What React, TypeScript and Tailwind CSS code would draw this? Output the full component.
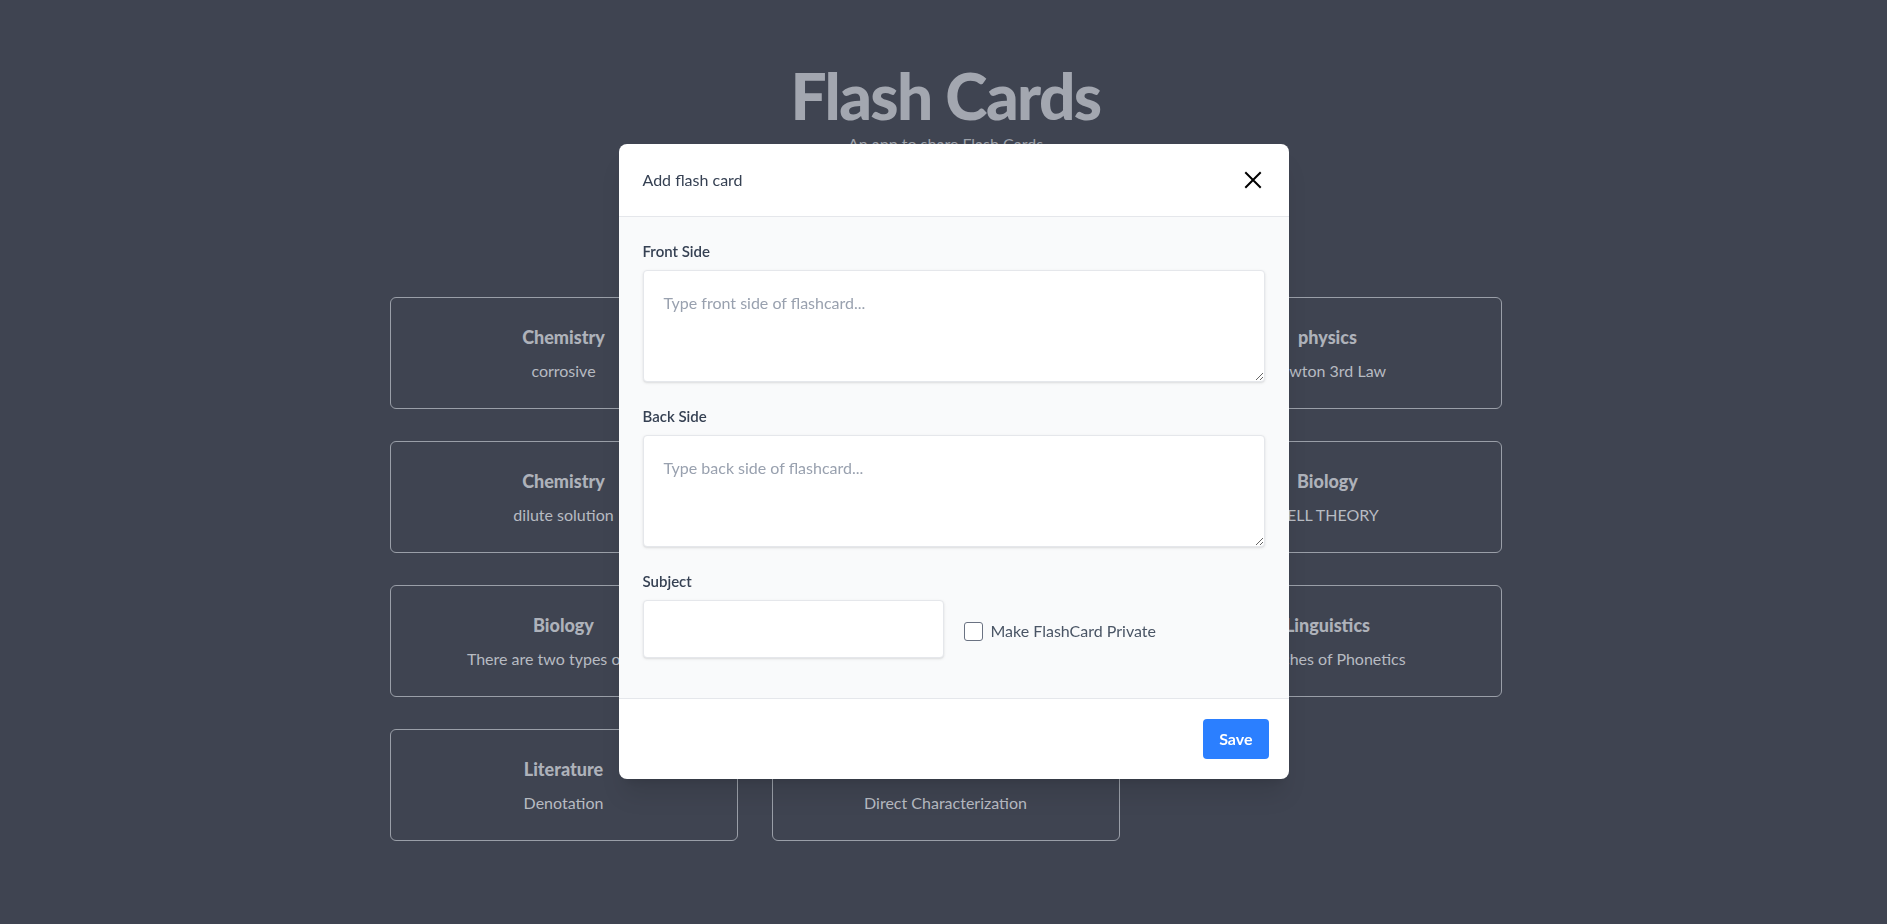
import { useState } from "react";

const CARDS = [
  { subject: "Chemistry", text: "corrosive" },
  { subject: "Physics", text: "Kinetic Energy" },
  { subject: "physics", text: "Newton 3rd Law" },
  { subject: "Chemistry", text: "dilute solution" },
  { subject: "Chemistry", text: "Concentrated Solution" },
  { subject: "Biology", text: "CELL THEORY" },
  { subject: "Biology", text: "There are two types of cells" },
  { subject: "Physics", text: "Newton 1st Law" },
  { subject: "Linguistics", text: "Branches of Phonetics" },
  { subject: "Literature", text: "Denotation" },
  { subject: "Literature", text: "Direct Characterization" },
];

function CloseIcon() {
  return (
    <svg viewBox="0 0 24 24" className="w-6 h-6" fill="none" stroke="currentColor" strokeWidth={2} strokeLinecap="square">
      <path d="M5 5l14 14M19 5L5 19" />
    </svg>
  );
}

export default function App() {
  const [isPrivate, setIsPrivate] = useState(false);

  return (
    <div className="min-h-screen bg-[#3f4451] font-['Lato',sans-serif]">
      {/* Page */}
      <div className="flex flex-col items-center pt-16 pb-16 pl-1">
        <h1 className="text-[64px] leading-none font-black text-[#a3a7b0] tracking-tight">Flash Cards</h1>
        <p className="mt-1 text-base leading-6 text-[#9da1aa]">An app to share Flash Cards</p>
        <button className="mt-12 h-12 px-6 rounded-md bg-[#4a5060] text-[#a3a7b0] font-bold">Add Flash Card</button>

        <div className="mt-[45px] w-[1112px] grid grid-cols-3 gap-x-[34px] gap-y-8">
          {CARDS.map((c, i) => (
            <div key={i}
              className="h-28 rounded-md border border-[#9a9fa8] flex flex-col items-center justify-center text-center">
              <h3 className="text-lg leading-7 font-black text-[#aeb2ba]">{c.subject}</h3>
              <p className="mt-2 text-base leading-6 text-[#b7bbc2]">{c.text}</p>
            </div>
          ))}
        </div>
      </div>

      {/* Modal */}
      <div className="fixed inset-0 flex justify-center pl-5">
        <div className="mt-[144px] w-[670px] self-start rounded-lg bg-white overflow-hidden shadow-xl">
          <div className="flex items-center justify-between p-6 border-b border-gray-200">
            <h2 className="text-base leading-6 text-gray-700">Add flash card</h2>
            <button className="text-black"><CloseIcon /></button>
          </div>

          <div className="bg-gray-50 px-6 pt-6 pb-10">
            <label className="block text-[15px] leading-[21px] font-semibold text-gray-700">Front Side</label>
            <textarea
              placeholder="Type front side of flashcard..."
              className="mt-2 block w-full h-[112px] p-5 bg-white border border-gray-200 rounded shadow-sm text-base text-gray-700 placeholder:text-gray-400 outline-none"
            />

            <label className="mt-6 block text-[15px] leading-[21px] font-semibold text-gray-700">Back Side</label>
            <textarea
              placeholder="Type back side of flashcard..."
              className="mt-2 block w-full h-[112px] p-5 bg-white border border-gray-200 rounded shadow-sm text-base text-gray-700 placeholder:text-gray-400 outline-none"
            />

            <label className="mt-6 block text-[15px] leading-[21px] font-semibold text-gray-700">Subject</label>
            <div className="mt-2 grid grid-cols-2 gap-5 items-center">
              <input className="h-[58px] px-4 bg-white border border-gray-200 rounded shadow-sm outline-none" />
              <label className="flex items-center gap-2 pt-1 text-base text-gray-600">
                <input type="checkbox" checked={isPrivate} onChange={(e) => setIsPrivate(e.target.checked)}
                  className="appearance-none w-[19px] h-[19px] rounded-[3px] border border-gray-500 bg-white" />
                Make FlashCard Private
              </label>
            </div>
          </div>

          <div className="flex justify-end p-5 border-t border-gray-200">
            <button className="h-10 px-4 rounded bg-blue-500 text-white font-bold text-base">Save</button>
          </div>
        </div>
      </div>
    </div>
  );
}
